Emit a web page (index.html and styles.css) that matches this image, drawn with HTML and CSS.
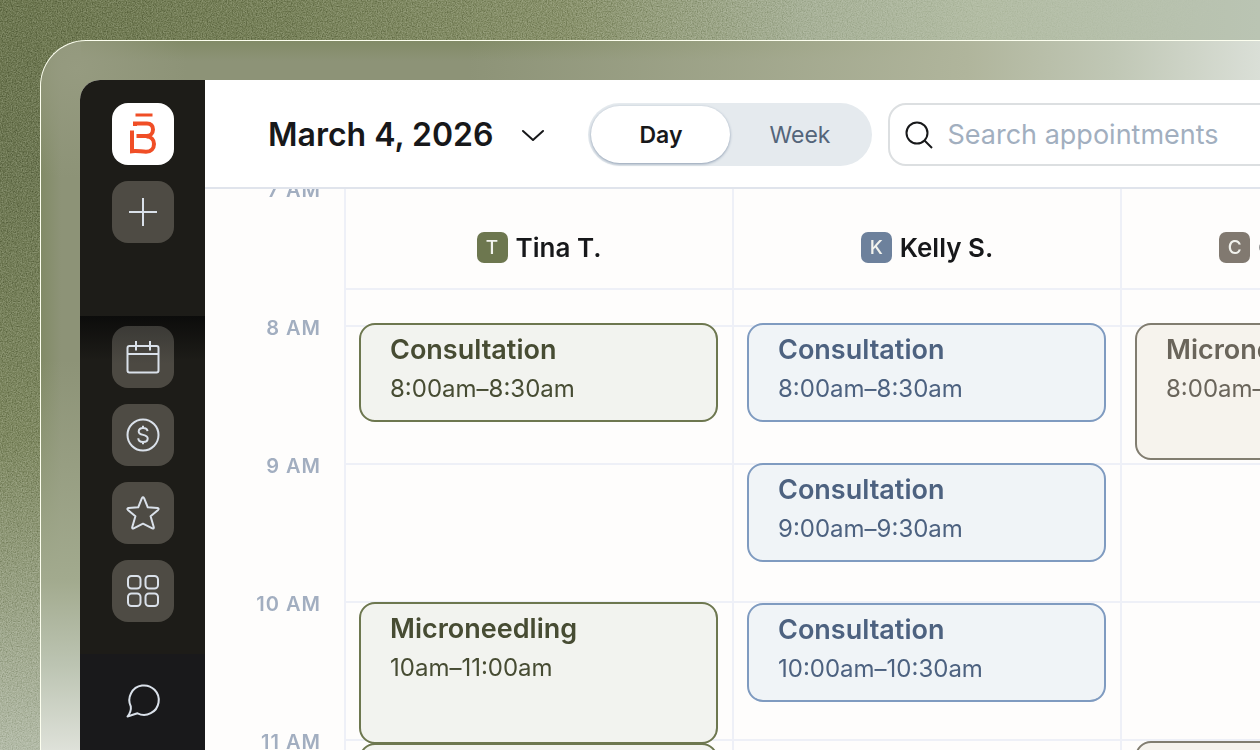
FILE: index.html
```html
<!DOCTYPE html>
<html lang="en">
<head>
<meta charset="utf-8">
<meta name="viewport" content="width=device-width, initial-scale=1">
<title>Appointments</title>
<link rel="stylesheet" href="styles.css">
</head>
<body>
<svg class="grain" aria-hidden="true">
  <filter id="grain" color-interpolation-filters="sRGB"><feTurbulence type="fractalNoise" baseFrequency="0.8" numOctaves="2" seed="4"/><feColorMatrix values="1.6 0 0 0 -0.2  1.6 0 0 0 -0.2  1.6 0 0 0 -0.2  0 0 0 0 1"/></filter>
  <rect width="100%" height="100%" filter="url(#grain)"/>
</svg>
<div class="frame">
  <div class="app">
    <nav class="sidebar" aria-label="Main">
      <div class="side-top">
        <a class="tile logo" href="#" aria-label="Home">
          <svg width="32" height="44" viewBox="0 0 32 44">
            <path d="M8.500 3H25.500" stroke-width="3"/>
            <path d="M8 14v-2.500h12c4 0 6 2.600 6 6s-2.600 6.500-6.500 6.500H9.500M19.500 24.500c4.500 0 7.500 3 7.500 7.500s-3 7.800-8 7.800c-5 0-9-1.500-14-.600V18.500"/>
          </svg>
        </a>
        <button class="tile" aria-label="Add"><svg width="28" height="28" viewBox="0 0 28 28"><path d="M14 0v28M0 14h28"/></svg></button>
      </div>
      <div class="side-main">
        <button class="tile shaded" aria-label="Calendar"><svg width="34" height="34" viewBox="0 0 34 34"><rect x="1.500" y="6" width="31" height="26.500" rx="2"/><path d="M1.500 14h31M10 1v9.500M24 1v9.500"/></svg></button>
        <button class="tile" aria-label="Sales"><svg width="34" height="34" viewBox="0 0 34 34"><circle cx="17" cy="17" r="15.500"/><path d="M21.500 13.200c-.200-2.200-2-3.200-4.500-3.200s-4.300 1.300-4.300 3.400c0 4.600 9 2.400 9 7.100 0 2.200-1.900 3.500-4.600 3.500-2.900 0-4.800-1.300-4.800-3.700M17 7.800V10M17 24v2.300"/></svg></button>
        <button class="tile" aria-label="Favorites"><svg width="34" height="34" viewBox="0 0 34 34"><path d="M15.900 2.200q1.100-1.800 2.200 0L21.800 11.300l9.700.800q1.900.400.600 1.800L24.600 20.200l3.200 11q.200 1.900-1.500 1.200L17 27.700l-9.300 4.700q-1.700.700-1.500-1.200l3.200-11L1.900 13.900q-1.300-1.400.600-1.800l9.700-.800z"/></svg></button>
        <button class="tile" aria-label="Apps"><svg width="34" height="34" viewBox="0 0 34 34"><rect x="2" y="2" width="12.500" height="12.500" rx="3.500"/><rect x="19.500" y="2" width="12.500" height="12.500" rx="3.500"/><rect x="2" y="19.500" width="12.500" height="12.500" rx="3.500"/><rect x="19.500" y="19.500" width="12.500" height="12.500" rx="3.500"/></svg></button>
      </div>
      <div class="side-bottom">
        <button class="tile plain" aria-label="Messages"><svg width="34" height="34" viewBox="0 0 34 34"><path d="M4.800 22.500A14.700 14.700 0 1 1 11.500 29.300L1.500 32.500q4-5 3.300-10z"/></svg></button>
      </div>
    </nav>
    <main class="main">
      <header class="toolbar">
        <button class="date">March 4, 2026
          <svg width="24" height="12" viewBox="0 0 24 12" fill="none" stroke="#17181a" stroke-width="2" stroke-linecap="round" stroke-linejoin="round"><path d="M2 2l10 9 10-9"/></svg>
        </button>
        <div class="toggle" role="group" aria-label="View">
          <button class="view active" aria-pressed="true">Day</button>
          <button class="view" aria-pressed="false">Week</button>
        </div>
        <label class="search">
          <svg width="28" height="28" viewBox="0 0 28 28" fill="none" stroke="#17181a" stroke-width="2"><circle cx="12" cy="12" r="10.500"/><path d="M19.500 19.500l7.500 7.500"/></svg>
          <input type="search" placeholder="Search appointments" aria-label="Search appointments">
        </label>
      </header>
      <div class="calendar">
        <ol class="hours">
          <li>7 AM</li><li>8 AM</li><li>9 AM</li><li>10 AM</li><li>11 AM</li>
        </ol>
        <section class="day green">
          <h2><span class="badge">T</span>Tina T.</h2>
          <div class="slots">
            <article class="event short"><h3>Consultation</h3><p>8:00am–8:30am</p></article>
            <article class="event hour after-free-hour"><h3>Microneedling</h3><p>10am–11:00am</p></article>
            <article class="event hour joined"></article>
          </div>
        </section>
        <section class="day blue">
          <h2><span class="badge">K</span>Kelly S.</h2>
          <div class="slots">
            <article class="event short"><h3>Consultation</h3><p>8:00am–8:30am</p></article>
            <article class="event short after-half-hour"><h3>Consultation</h3><p>9:00am–9:30am</p></article>
            <article class="event short after-half-hour"><h3>Consultation</h3><p>10:00am–10:30am</p></article>
          </div>
        </section>
        <section class="day taupe">
          <h2><span class="badge">C</span>Christina W.</h2>
          <div class="slots">
            <article class="event hour-tight"><h3>Microneedling</h3><p>8:00am–9:00am</p></article>
            <article class="event hour after-two-hours"></article>
          </div>
        </section>
      </div>
    </main>
  </div>
</div>
</body>
</html>
```
FILE: styles.css
```css
* { box-sizing: border-box; }
body {
  margin: 0;
  height: 100vh;
  overflow: hidden;
  display: flex;
  padding: 40px 0 0 40px;
  font-family: Inter, "Liberation Sans", sans-serif;
  color: #17181a;
  background:
    linear-gradient(to bottom, #68724b 0, #68724d 22%, #7a845c 58%, #929b7c 78%, #b0b8a4 100%) left / 40px 100% no-repeat,
    linear-gradient(to right, #68724b 0, #727c54 22%, #848d66 45%, #a4ae94 64%, #b1bba2 78%, #bac4b3 100%);
}
h2, h3, p, ol { margin: 0; padding: 0; }
button { font: inherit; color: inherit; border: 0; background: none; padding: 0; }
.grain {
  position: absolute;
  inset: 0;
  width: 100%;
  height: 100%;
  opacity: .45;
  mix-blend-mode: soft-light;
  -webkit-mask-image: linear-gradient(135deg, #000 0 35%, transparent 62%);
  mask-image: linear-gradient(135deg, #000 0 35%, transparent 62%);
}
.frame {
  position: relative;
  flex: 1;
  min-width: 0;
  display: flex;
  padding: 39px 0 0 39px;
  border: 1px solid #fdfff0;
  border-width: 1px 0 0 1px;
  border-radius: 46px 0 0 0;
  background:
    radial-gradient(circle at 36px 28px, #969b80 0, #969b8000 110px),
    linear-gradient(to bottom, #9aa38200 45%, #a2aa8e 76%, #bcc4b2 88%, #dee1d9 100%) left / 40px 100% no-repeat,
    linear-gradient(to right, #9aa38200 35%, #b0b59c 76%, #c0c7b5 88%, #dadfd7 100%) top / 100% 40px no-repeat,
    linear-gradient(to right, #828b67 0, #8d9377 20px) left / 40px 100% no-repeat,
    linear-gradient(to bottom, #828b67 0, #8d9377 20px);
}
.app {
  flex: 1;
  min-width: 0;
  display: flex;
  overflow: hidden;
  border-radius: 20px 0 0 0;
  background: #fefdfc;
}
.sidebar {
  flex: none;
  width: 125px;
  display: flex;
  flex-direction: column;
  background: #1d1c18;
}
.side-top, .side-main, .side-bottom {
  display: flex;
  flex-direction: column;
  align-items: center;
  gap: 16px;
}
.side-top { padding: 23px 0 73px; }
.side-main {
  padding: 10px 0 32px;
  background: linear-gradient(to bottom, #0c0c0b 0, #1d1c18 44px);
}
.side-bottom { flex: 1; padding-top: 16px; background: #19191b; }
.tile {
  width: 62px;
  height: 62px;
  display: flex;
  align-items: center;
  justify-content: center;
  border-radius: 16px;
  background: #4e4b44;
}
.tile svg {
  fill: none;
  stroke: #dae1ea;
  stroke-width: 2;
  stroke-linejoin: round;
  overflow: visible;
}
.tile.shaded { background: linear-gradient(#3b3a36, #4c4942 60%); }
.tile.logo { background: #fff; }
.tile.logo svg { stroke: #f04e26; stroke-width: 4; stroke-linejoin: miter; }
.tile.plain { background: none; }
.main {
  flex: 1;
  min-width: 0;
  display: flex;
  flex-direction: column;
}
.toolbar {
  display: flex;
  align-items: center;
  padding: 23px 0 21px 63px;
  border-bottom: 2px solid #e0e4ec;
  background: #fff;
}
.date {
  display: flex;
  align-items: center;
  gap: 28px;
  margin-right: 43px;
  font-size: 32px;
  font-weight: 600;
  line-height: 40px;
  white-space: nowrap;
}
.toggle {
  flex: none;
  display: flex;
  width: 284px;
  padding: 3px;
  border-radius: 32px;
  background: #e5eaee;
}
.view {
  flex: 1;
  height: 57px;
  border-radius: 29px;
  font-size: 23px;
  color: #54657a;
}
.view.active {
  background: #fff;
  color: #17181a;
  font-weight: 600;
  box-shadow: 0 1px 3px #8b9bb0;
}
.search {
  flex: 1 0 480px;
  display: flex;
  align-items: center;
  gap: 14px;
  height: 63px;
  margin-left: 16px;
  padding: 0 15px;
  border: 2px solid #dcdfe1;
  border-radius: 18px;
}
.search input {
  flex: 1;
  min-width: 0;
  border: 0;
  padding: 0;
  outline: 0;
  background: none;
  font: inherit;
  font-size: 27px;
}
.search input::placeholder { color: #a2afbf; opacity: 1; }
.calendar {
  flex: 1;
  min-height: 0;
  display: grid;
  grid-template-columns: 139px repeat(3, minmax(388px, 1fr));
  overflow: hidden;
}
.hours {
  margin-top: -9px;
  padding-right: 23px;
  list-style: none;
  text-align: right;
  font-size: 20px;
  font-weight: 600;
  line-height: 20px;
  letter-spacing: 1px;
  color: #a2aec0;
}
.hours li { height: 138px; }
.day { border-left: 2px solid #eef0f7; }
.day h2 {
  display: flex;
  align-items: center;
  justify-content: center;
  gap: 8px;
  height: 101px;
  padding-top: 18px;
  border-bottom: 2px solid #eef0f7;
  font-size: 26px;
  font-weight: 600;
  white-space: nowrap;
}
.badge {
  width: 31px;
  height: 31px;
  border-radius: 7px;
  background: var(--badge);
  color: #f2f3ee;
  font-size: 19px;
  font-weight: 500;
  line-height: 31px;
  text-align: center;
}
.slots {
  display: flex;
  flex-direction: column;
  min-height: 600px;
  padding: 33px 14px 0 13px;
  background: linear-gradient(#eef0f7, #eef0f7 2px, transparent 2px) 0 35px / 100% 138px;
}
.event {
  padding: 9px 29px;
  border: 2px solid var(--line);
  border-radius: 16px;
  background: var(--fill);
  color: var(--ink);
  white-space: nowrap;
}
.event h3 { font-size: 27px; font-weight: 600; line-height: 32px; }
.event p { margin-top: 7px; font-size: 24px; line-height: 32px; }
.short { height: 99px; }
.hour-tight { height: 137px; }
.hour { height: 142px; }
.after-half-hour { margin-top: 41px; }
.after-free-hour { margin-top: 180px; }
.after-two-hours { margin-top: 281px; }
.joined { margin-top: -1px; }
.green { --badge: #6d774f; --line: #6d774f; --fill: #f2f3ef; --ink: #474c33; }
.blue { --badge: #6d819c; --line: #7f9bc0; --fill: #f0f4f7; --ink: #4d6280; }
.taupe { --badge: #817970; --line: #817d70; --fill: #f6f3ed; --ink: #6a655b; }
```
